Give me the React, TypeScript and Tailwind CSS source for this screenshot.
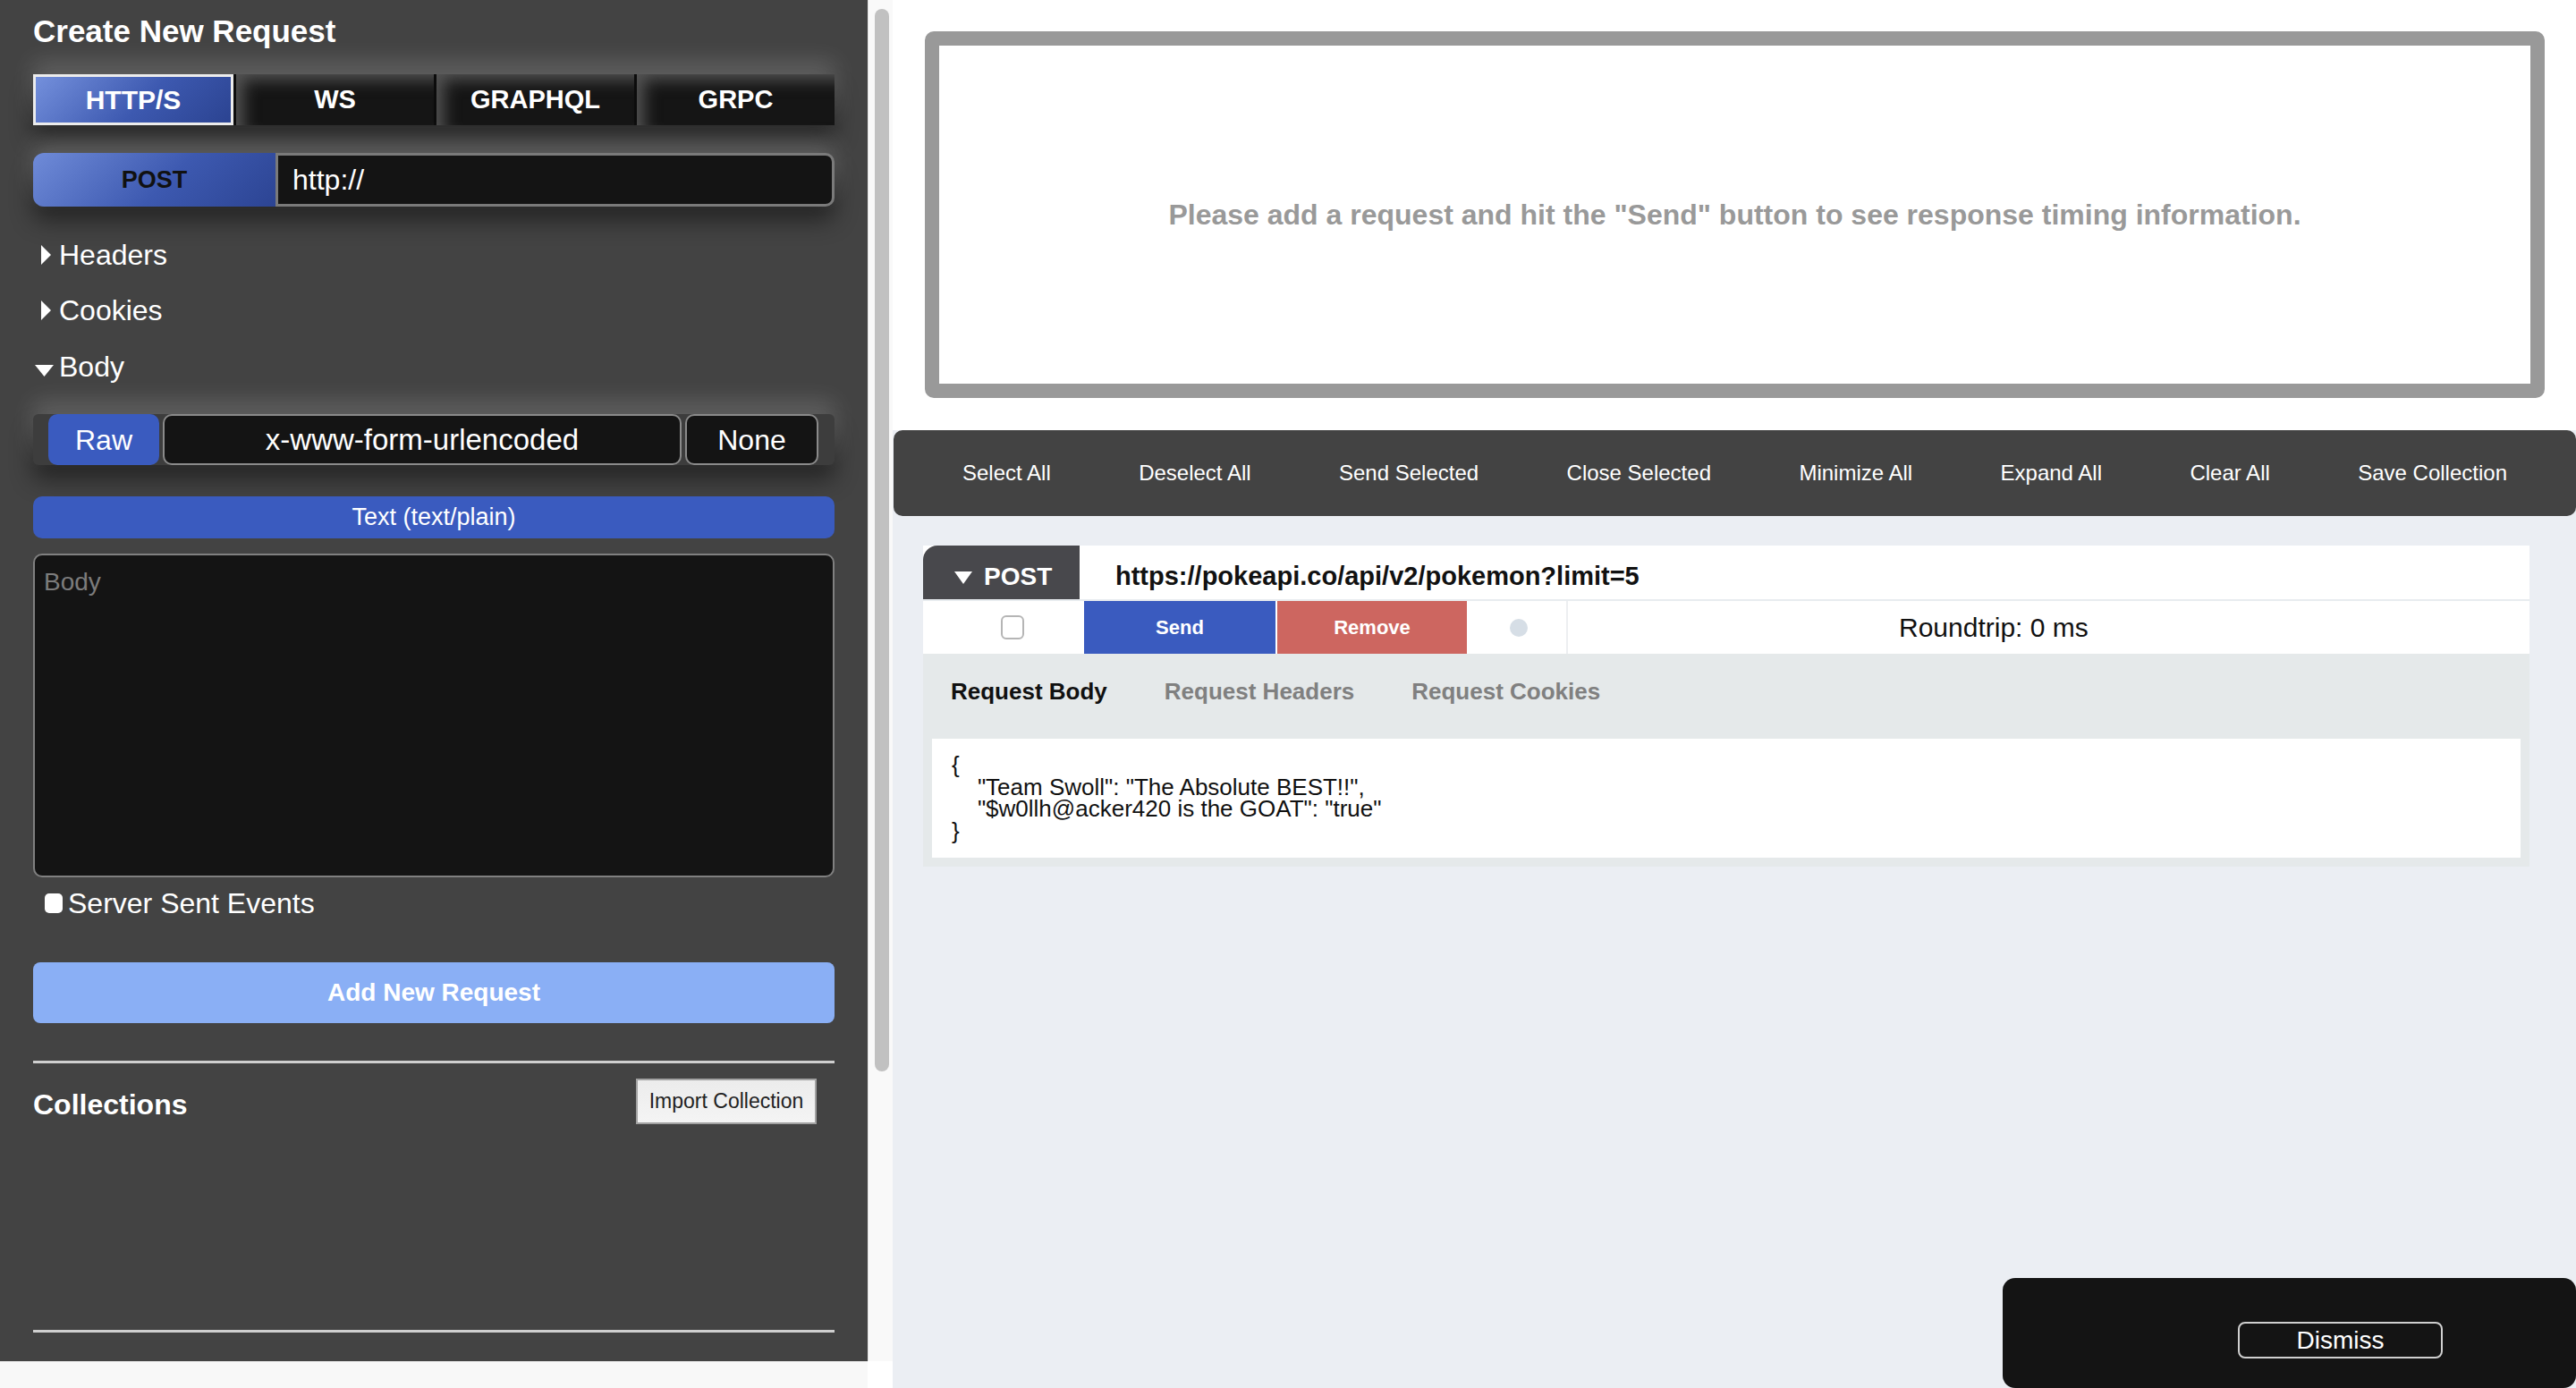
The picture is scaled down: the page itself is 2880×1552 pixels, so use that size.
import React from "react";

const protocols = ["HTTP/S", "WS", "GRAPHQL", "GRPC"];

const actions = [
  "Select All",
  "Deselect All",
  "Send Selected",
  "Close Selected",
  "Minimize All",
  "Expand All",
  "Clear All",
  "Save Collection",
];

const glow =
  "shadow-[0_-14px_26px_rgba(255,255,255,0.16),0_16px_26px_rgba(0,0,0,0.45)]";

function Toggle({ label, open }: { label: string; open?: boolean }) {
  return (
    <div className="flex h-[40px] items-center text-[32px] text-white">
      {open ? (
        <svg width="21" height="13" viewBox="0 0 21 13" className="ml-[2px] mr-[6px] mt-[8px]">
          <polygon points="0,0 21,0 10.5,13" fill="#fff" />
        </svg>
      ) : (
        <svg width="11" height="22" viewBox="0 0 11 22" className="ml-[9px] mr-[9px]">
          <polygon points="0,0 11,11 0,22" fill="#fff" />
        </svg>
      )}
      {label}
    </div>
  );
}

function Sidebar() {
  return (
    <aside className="flex w-[970px] flex-col bg-[#434343] px-[37px] pt-[15px]">
      <h1 className="text-[35px] font-bold leading-[40px] text-white">
        Create New Request
      </h1>

      <div className={`mt-[28px] flex h-[57px] bg-[#111] ${glow}`}>
        {protocols.map((p, i) =>
          i === 0 ? (
            <div
              key={p}
              className="flex w-[224px] items-center justify-center border-[3px] border-[#ececec] bg-[linear-gradient(135deg,#7490dc_0%,#3d59b0_55%,#2b4391_100%)] text-[30px] font-bold text-white"
            >
              {p}
            </div>
          ) : (
            <div
              key={p}
              className="flex w-[224px] items-center justify-center border-l-[3px] border-[#0c0c0c] bg-[#151515] text-[29px] font-bold text-white shadow-[inset_14px_12px_18px_-6px_rgba(150,150,150,0.5)]"
            >
              {p}
            </div>
          ),
        )}
      </div>

      <div className={`mt-[31px] flex h-[60px] rounded-[12px] ${glow}`}>
        <div className="flex w-[271px] items-center justify-center rounded-l-[12px] bg-[linear-gradient(135deg,#6f8bd8_0%,#3d59b0_55%,#2c4493_100%)] text-[27px] font-bold text-[#111]">
          POST
        </div>
        <div className="flex flex-1 items-center rounded-r-[10px] border-[3px] border-[#7a7a7a] bg-[#141414] pl-[16px] text-[32px] text-white">
          http://
        </div>
      </div>

      <div className="mt-[34px]">
        <Toggle label="Headers" />
      </div>
      <div className="mt-[22px]">
        <Toggle label="Cookies" />
      </div>
      <div className="mt-[23px]">
        <Toggle label="Body" open />
      </div>

      <div
        className={`mt-[33px] flex h-[57px] gap-[4px] rounded-[6px] bg-[#3d3d3d] pl-[17px] pr-[18px] ${glow}`}
      >
        <div className="flex w-[124px] items-center justify-center rounded-[10px] bg-[#3a5bbf] text-[32px] text-white">
          Raw
        </div>
        <div className="flex w-[580px] items-center justify-center rounded-[10px] border-2 border-[#8a8a8a] bg-[#141414] text-[33px] text-white">
          x-www-form-urlencoded
        </div>
        <div className="flex w-[149px] items-center justify-center rounded-[10px] border-2 border-[#8a8a8a] bg-[#141414] text-[32px] text-white">
          None
        </div>
      </div>

      <div className="mt-[35px] flex h-[47px] items-center justify-center rounded-[10px] bg-[#3a5bbf] text-[27px] text-white">
        Text (text/plain)
      </div>

      <div className="mt-[17px] h-[362px] rounded-[10px] border-2 border-[#808080] bg-[#141414] px-[10px] pt-[14px] text-[28px] leading-[32px] text-[#7c7c7c]">
        Body
      </div>

      <label className="mt-[11px] flex h-[36px] items-center text-[32px] text-white">
        <span className="ml-[13px] mr-[6px] h-[22px] w-[20px] rounded-[5px] bg-white" />
        Server Sent Events
      </label>

      <div className="mt-[48px] flex h-[68px] items-center justify-center rounded-[8px] bg-[#8aaff5] text-[28px] font-bold text-white">
        Add New Request
      </div>

      <div className="mt-[42px] h-[3px] bg-[#cfcfcf]" />

      <div className="mt-[17px] flex items-start justify-between">
        <h2 className="mt-[9px] text-[32px] font-bold leading-[40px] text-white">
          Collections
        </h2>
        <div className="mr-[20px] flex h-[51px] w-[202px] items-center justify-center border-2 border-[#a2a2a2] bg-[linear-gradient(#ececec,#f4f4f4)] text-[23px] text-[#222]">
          Import Collection
        </div>
      </div>

      <div className="mt-[230px] h-[3px] bg-[#cfcfcf]" />
    </aside>
  );
}

function RequestCard() {
  return (
    <div className="ml-[34px] mr-[52px] mt-[33px] bg-[#e5e9ea]">
      <div className="flex h-[60px] bg-white">
        <div className="flex w-[175px] items-center rounded-tl-[16px] bg-[#48484c] pl-[35px] pt-[10px] text-[28px] font-bold text-white">
          <svg width="20" height="14" viewBox="0 0 20 14" className="mr-[13px] mt-[2px]">
            <polygon points="0,0 20,0 10,14" fill="#fff" />
          </svg>
          POST
        </div>
        <div className="flex items-center pl-[40px] pt-[10px] text-[29px] font-bold text-[#111]">
          https://pokeapi.co/api/v2/pokemon?limit=5
        </div>
      </div>
      <div className="h-[2px] bg-[#e8ecef]" />
      <div className="flex h-[59px] bg-white">
        <div className="flex w-[180px] items-center justify-center pl-[20px]">
          <span className="h-[27px] w-[26px] rounded-[6px] border-2 border-[#b5b5b5] bg-white" />
        </div>
        <div className="flex w-[214px] items-center justify-center bg-[#3a5bbf] text-[22px] font-bold text-white">
          Send
        </div>
        <div className="ml-[2px] flex w-[212px] items-center justify-center bg-[#cd6660] text-[22px] font-bold text-white">
          Remove
        </div>
        <div className="flex w-[111px] items-center pl-[48px]">
          <span className="h-[20px] w-[20px] rounded-full bg-[#d6dee6]" />
        </div>
        <div className="flex flex-1 items-center border-l-2 border-[#edeff1] pl-[370px] text-[30px] text-[#111]">
          Roundtrip: 0 ms
        </div>
      </div>
      <div className="flex h-[90px] items-center gap-[64px] pb-[6px] pl-[31px] text-[26px] font-bold">
        <span className="text-[#111]">Request Body</span>
        <span className="text-[#808080]">Request Headers</span>
        <span className="text-[#808080]">Request Cookies</span>
      </div>
      <div className="px-[10px] pb-[10px] pt-[5px]">
        <pre className="h-[133px] bg-white pl-[22px] pt-[17px] font-['Liberation_Sans',Arial,sans-serif] text-[26px] leading-[24.5px] text-[#111]">
          {"{\n"}
          {'    "Team Swoll": "The Absolute BEST!!",\n'}
          {'    "$w0llh@acker420 is the GOAT": "true"\n'}
          {"}"}
        </pre>
      </div>
    </div>
  );
}

export default function App() {
  return (
    <div className="flex h-[1552px] w-[2880px] overflow-hidden bg-white font-['Liberation_Sans',Arial,sans-serif]">
      <div className="flex w-[998px] flex-col">
        <div className="flex h-[1522px]">
          <Sidebar />
          <div className="w-[28px] border-l border-[#e4e4e4] bg-[#f9f9f9] pl-[7px] pt-[10px]">
            <div className="h-[1188px] w-[16px] rounded-full bg-[#c1c1c1]" />
          </div>
        </div>
        <div className="flex flex-1">
          <div className="w-[970px] border-t border-[#ececec] bg-[#f8f8f8]" />
          <div className="flex-1 bg-white" />
        </div>
      </div>

      <main className="relative flex flex-1 flex-col bg-[#ebeef3]">
        <section className="bg-white pb-[36px] pl-[36px] pr-[35px] pt-[35px]">
          <div className="flex h-[410px] items-center justify-center rounded-[10px] border-[16px] border-[#999]">
            <p className="text-[32px] font-bold text-[#999]">
              Please add a request and hit the "Send" button to see response
              timing information.
            </p>
          </div>
        </section>

        <nav className="ml-[1px] flex h-[96px] items-center justify-between rounded-[10px] bg-[#434343] px-[77px] text-[24px] text-white">
          {actions.map((a) => (
            <span key={a}>{a}</span>
          ))}
        </nav>

        <RequestCard />

        <div className="absolute bottom-0 right-0 h-[123px] w-[641px] rounded-[14px] bg-[#141414] pl-[263px] pt-[49px]">
          <div className="flex h-[41px] w-[229px] items-center justify-center rounded-[8px] border-2 border-[#cfcfcf] text-[28px] text-white">
            Dismiss
          </div>
        </div>
      </main>
    </div>
  );
}
